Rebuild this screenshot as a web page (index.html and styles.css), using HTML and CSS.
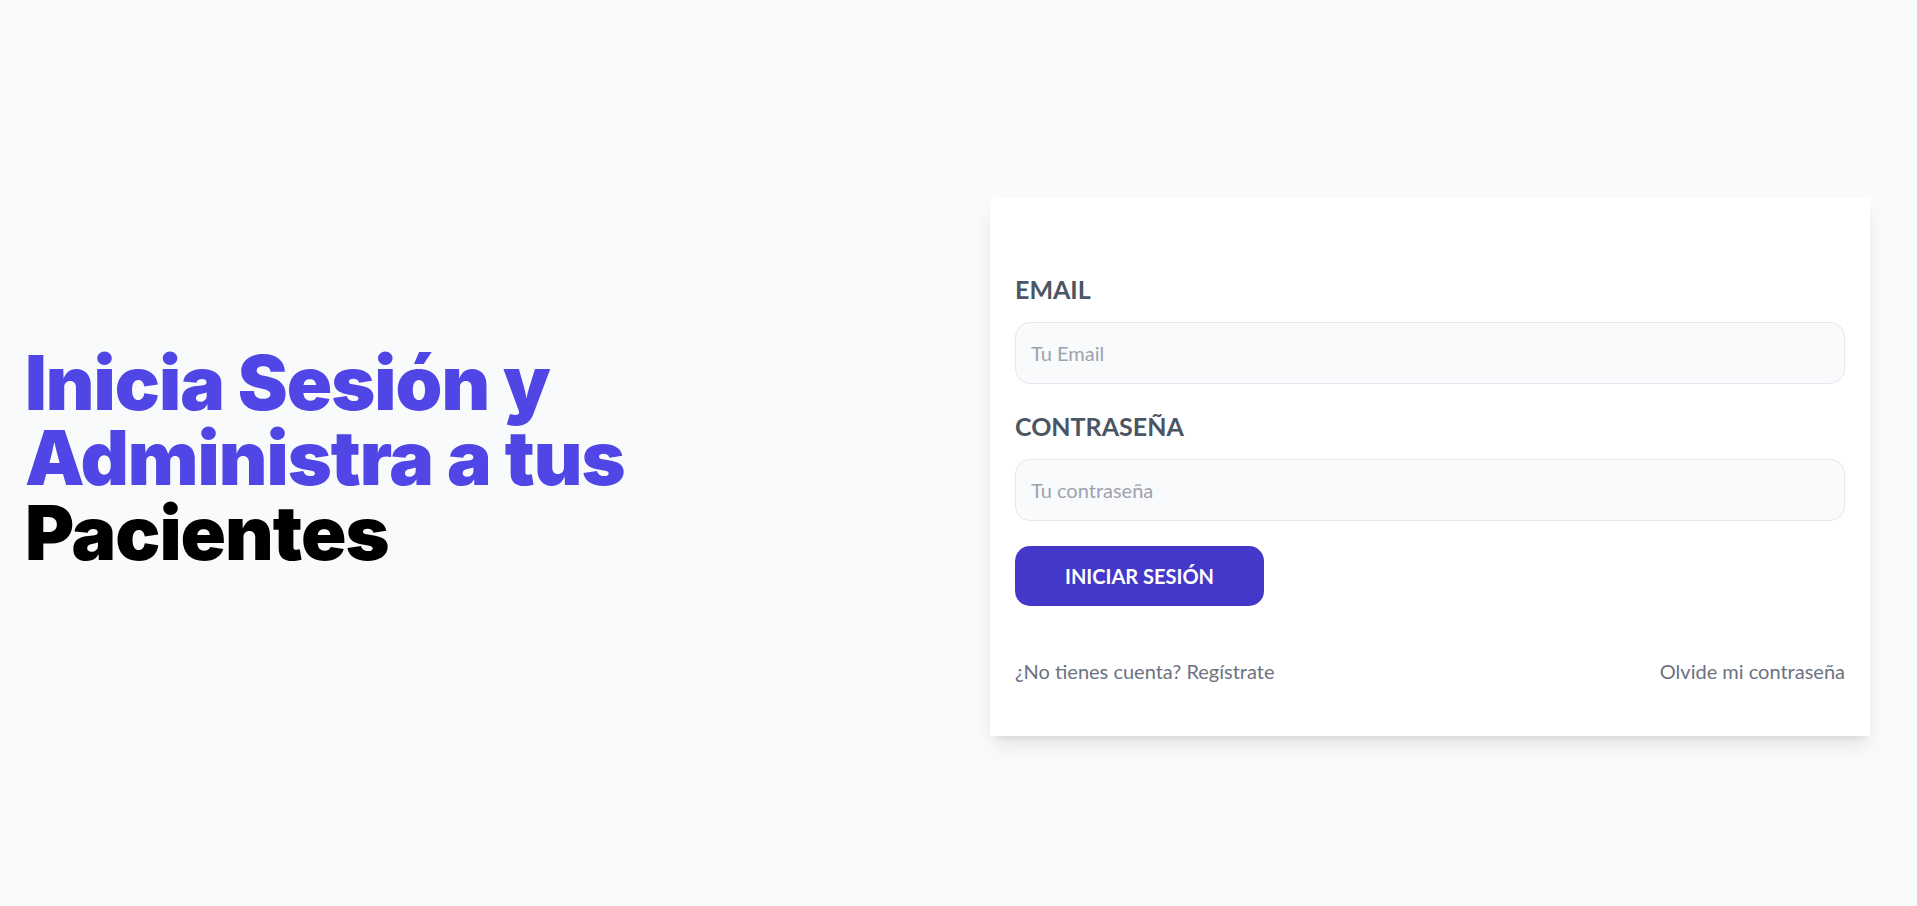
FILE: index.html
```
<!DOCTYPE html>
<html lang="es">
<head>
<meta charset="utf-8">
<title>Iniciar Sesión</title>
<link rel="stylesheet" href="styles.css">
</head>
<body>
<main class="container">
  <div class="intro">
    <h1 class="title">Inicia Sesión y Administra a tus <span class="title-dark">Pacientes</span></h1>
  </div>
  <div class="card">
    <form class="form">
      <div class="field">
        <label class="label" for="email">Email</label>
        <input class="input" id="email" type="email" placeholder="Tu Email">
      </div>
      <div class="field">
        <label class="label" for="password">Contraseña</label>
        <input class="input" id="password" type="password" placeholder="Tu contraseña">
      </div>
      <input class="submit" type="submit" value="Iniciar Sesión">
    </form>
    <nav class="links">
      <a class="link" href="#">¿No tienes cuenta? Regístrate</a>
      <a class="link" href="#">Olvide mi contraseña</a>
    </nav>
  </div>
</main>
</body>
</html>
```
FILE: styles.css
```
html, body {
  margin: 0;
  padding: 0;
}

body {
  background: #f9fafb;
  font-family: "Lato", "Noto Sans", sans-serif;
  color: #111827;
}

.container {
  box-sizing: border-box;
  width: 1895px;
  margin-top: 147px;
  padding: 25px;
  display: grid;
  grid-template-columns: 1fr 1fr;
  column-gap: 85px;
  align-items: center;
}

.intro {
  padding-top: 7px;
}

.title {
  margin: 0;
  font-family: "Inter", "Noto Sans", sans-serif;
  font-weight: 900;
  font-size: 75px;
  line-height: 1;
  letter-spacing: -1px;
  color: #4f46e5;
}

.title-dark {
  color: #000000;
}

.card {
  margin-top: 25px;
  background: #ffffff;
  padding: 50px 25px;
  box-shadow: 0 12px 19px -4px rgba(0, 0, 0, 0.1), 0 5px 8px -5px rgba(0, 0, 0, 0.1);
}

.form {
  margin: 0;
}

.field {
  margin: 25px 0;
}

.label {
  display: block;
  text-transform: uppercase;
  color: #4b5563;
  font-weight: 700;
  font-size: 25px;
  line-height: 35px;
}

.input {
  display: block;
  box-sizing: border-box;
  width: 100%;
  margin-top: 15px;
  padding: 15px;
  border: 1px solid #e5e7eb;
  border-radius: 15px;
  background: #f9fafb;
  font-family: "Lato", "Noto Sans", sans-serif;
  font-size: 20px;
  line-height: 30px;
  color: #111827;
  outline: none;
}

.input::placeholder {
  color: #9ca3af;
}

.submit {
  display: block;
  padding: 15px 50px;
  border: none;
  border-radius: 15px;
  background: #4338ca;
  color: #ffffff;
  text-transform: uppercase;
  font-family: "Lato", "Noto Sans", sans-serif;
  font-weight: 700;
  font-size: 20px;
  line-height: 30px;
  cursor: pointer;
}

.links {
  margin-top: 50px;
  display: flex;
  justify-content: space-between;
}

.link {
  color: #6b7280;
  font-size: 20px;
  line-height: 30px;
  text-decoration: none;
}
```
